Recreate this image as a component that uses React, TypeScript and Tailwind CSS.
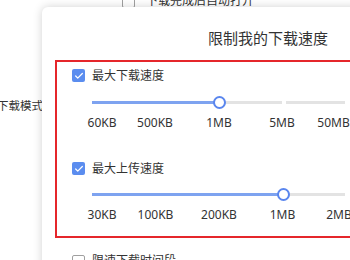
import { Check } from 'lucide-react';

type Tick = { label: string; w: number };

function Box({ checked }: { checked: boolean }) {
    return checked ? (
        <div className="w-[13px] h-[13px] rounded-[2px] bg-[#5b8def] flex items-center justify-center shrink-0">
            <Check className="w-[10px] h-[10px] text-white" strokeWidth={3} />
        </div>
    ) : (
        <div className="w-[13px] h-[13px] rounded-[2px] border border-[#a0a0a0] bg-white shrink-0" />
    );
}

function Slider({ fill, gap }: { fill: number; gap?: number }) {
    // track runs 253px; fill = thumb centre from track start
    return (
        <div className="relative w-[253px] h-[12px] ml-[35px]">
            <div className="absolute left-0 right-0 top-[5px] h-[3px] bg-[#e3e3e3]" />
            {gap !== undefined && <div className="absolute top-[5px] h-[3px] w-[4px] bg-white" style={{ left: gap }} />}
            <div className="absolute left-0 top-[5px] h-[3px] bg-[#7ea3f0]" style={{ width: fill }} />
            <div
                className="absolute top-0 w-[13px] h-[13px] rounded-full border-2 border-[#5a86ee] bg-white"
                style={{ left: fill - 6 }}
            />
        </div>
    );
}

function Labels({ ticks }: { ticks: Tick[] }) {
    return (
        <div className="flex ml-[19px] text-[12px] leading-[16px] text-[#333] whitespace-nowrap">
            {ticks.map((t) => (
                <div key={t.label} className="text-center shrink-0" style={{ width: t.w }}>
                    {t.label}
                </div>
            ))}
        </div>
    );
}

export default function App() {
    const downTicks = [
        { label: '60KB', w: 52 },
        { label: '500KB', w: 54 },
        { label: '1MB', w: 74 },
        { label: '5MB', w: 52 },
        { label: '50MB', w: 51 },
    ];
    const upTicks = [
        { label: '30KB', w: 52 },
        { label: '100KB', w: 55 },
        { label: '200KB', w: 72 },
        { label: '1MB', w: 55 },
        { label: '2MB', w: 58 },
    ];

    return (
        <div className="relative w-[350px] h-[260px] overflow-hidden bg-white font-['Noto_Sans','Noto_Sans_CJK_SC',sans-serif] text-[#333]">
            {/* settings page behind the dialog */}
            <div className="flex items-center gap-[11px] ml-[122px] -mt-[7px] text-[12px] leading-[16px] text-[#333]">
                <Box checked={false} />
                <span>下载完成后自动打开</span>
            </div>
            <div className="mt-[89px] w-[43px] text-[11.5px] leading-[16px] whitespace-nowrap text-[#333] flex justify-end">
                <span>下载模式</span>
            </div>

            {/* dialog */}
            <div className="absolute left-[42px] top-[7px] w-[452px] h-[300px] bg-white rounded-[6px] shadow-[0_0_10px_rgba(0,0,0,0.18)]">
                <div className="pt-[22px] text-center text-[15px] leading-[18px] text-[#333]">限制我的下载速度</div>
                <div className="mt-[13px] ml-[13px] border-2 border-[#e5262b] pt-[7px] pb-[13px] pl-[15px]">
                    <div className="flex items-center gap-[7px] h-[13px] text-[12px] leading-[16px]">
                        <Box checked />
                        <span>最大下载速度</span>
                    </div>
                    <div className="mt-[14px] -ml-[15px]">
                        <Slider fill={127} gap={190} />
                    </div>
                    <div className="mt-[7px] -ml-[15px]">
                        <Labels ticks={downTicks} />
                    </div>

                    <div className="mt-[31px] flex items-center gap-[7px] h-[13px] text-[12px] leading-[16px]">
                        <Box checked />
                        <span>最大上传速度</span>
                    </div>
                    <div className="mt-[13px] -ml-[15px]">
                        <Slider fill={191} />
                    </div>
                    <div className="mt-[7px] -ml-[15px]">
                        <Labels ticks={upTicks} />
                    </div>
                </div>
                <div className="mt-[15px] ml-[30px] flex items-center gap-[7px] text-[12px] leading-[16px]">
                    <Box checked={false} />
                    <span>限速下载时间段</span>
                </div>
            </div>
        </div>
    );
}
